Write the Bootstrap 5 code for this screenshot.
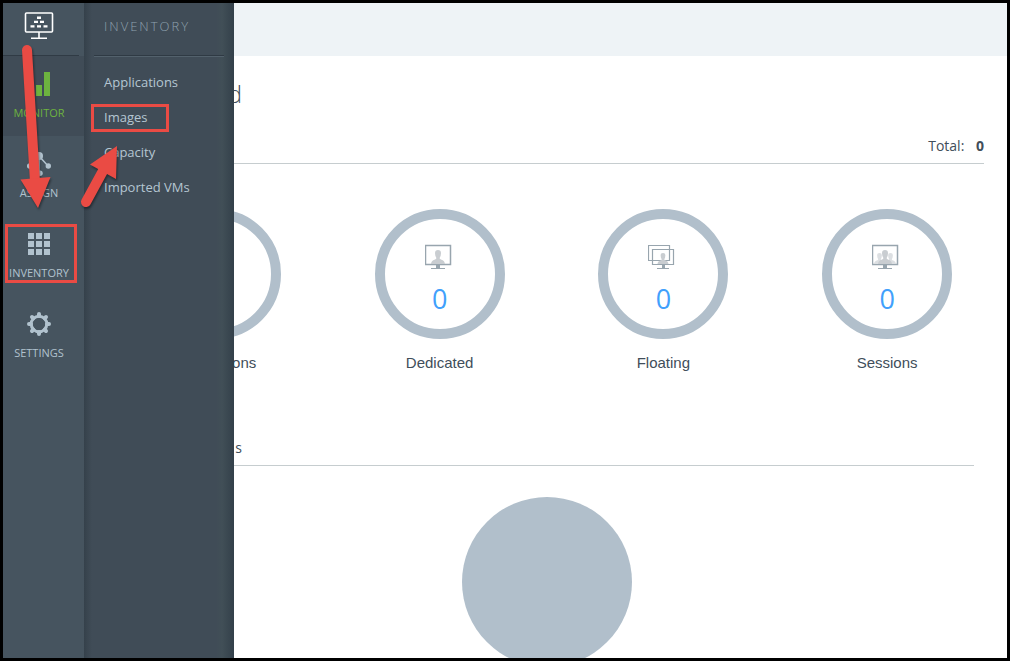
<!DOCTYPE html>
<html lang="en">
<head>
<meta charset="utf-8">
<meta name="viewport" content="width=device-width, initial-scale=1">
<title>Dashboard</title>
<link href="https://cdn.jsdelivr.net/npm/bootstrap@5.3.0/dist/css/bootstrap.min.css" rel="stylesheet">
<style>
  body { font-family: "Open Sans", sans-serif; font-size: 14px; color: #414e5a; }
  .app-frame { border: 3px solid #000; }
  .rail { width: 81px; background: #46545f; color: #b1c2ce; }
  .rail-logo { height: 53px; padding-right: 9px; }
  .rail-logo::after { content: ""; height: 1px; background: #303b45; position: absolute; left: 0; right: 5px; bottom: 0; }
  .rail-item { height: 80px; padding: 16px 9px 0 0; gap: 9px; font-size: 11px; line-height: 16px; color: inherit; text-decoration: none; white-space: nowrap; }
  .rail-item.active { background: #404c57; color: #6db33f; }
  .flyout { left: 81px; top: 0; bottom: 0; width: 150px; background: linear-gradient(90deg, #35414b, #404c57 8px, #404c57 132px, #414f57 138px, #33404a); }
  .flyout-title { height: 53px; margin: 0 10px; padding: 13px 0 0 10px; font-size: 13px; font-weight: 300; line-height: 20px; letter-spacing: 2px; color: #8fa1ae; border-bottom: 1px solid #2f3a44; box-shadow: 0 1px #53616c; }
  .flyout-links { padding: 16px 0 0 20px; gap: 15px; }
  .flyout-links a { font-size: 13px; line-height: 20px; color: #b5c6d2; text-decoration: none; }
  .topbar { height: 53px; background: #eef3f6; }
  .page-pad { padding-left: 36px; padding-right: 23px; }
  .page-title { font-size: 24px; line-height: 32px; font-weight: 300; margin: 22px 0 0; }
  .total-line { margin-top: 26px; padding-bottom: 7px; line-height: 20px; border-bottom: 1px solid #c6cdcf; }
  .rings { padding: 45px 8px 0 20px; }
  .ring { width: 130px; height: 130px; border: 10px solid #b1bfcb; border-radius: 50%; padding-top: 24px; }
  .ring-count { font-size: 27px; line-height: 40px; color: #41a0fc; margin-top: 8px; }
  .ring-label { font: 15px/20px "Liberation Sans", Arial, sans-serif; margin-top: 14px; }
  .section-head { margin: 65px 33px 0 36px; padding-bottom: 7px; line-height: 20px; border-bottom: 1px solid #c6cdcf; }
  .heading-text { width: 122px; }
  .pie { width: 170px; height: 170px; border-radius: 50%; background: #b1bfcb; margin: 31px 33px 0 36px; }
</style>
</head>
<body>
<svg class="d-none" aria-hidden="true">
  <symbol id="person" viewBox="0 0 14 14"><path d="M7 0C9 0 10 1 10 3.3L9.6 6 8.8 7.5V9C11 10 13.5 10.2 14 14H0C.5 10.2 3 10 5.2 9V7.5L4.4 6 4 3.3C4 1 5 0 7 0Z"/></symbol>
</svg>
<div class="app-frame position-relative vh-100 overflow-hidden d-flex">
  <nav class="rail flex-shrink-0 d-flex flex-column" aria-label="Main">
    <div class="rail-logo position-relative text-center text-white">
      <svg class="mt-2" width="30" height="30" viewBox="0 0 30 30" fill="currentColor" aria-hidden="true">
        <rect x="1.500" y="2" width="27" height="19" rx="1" fill="none" stroke="currentColor" stroke-width="1.6"/>
        <path d="M14.200 21h1.600v6h-1.600zM7 26.500h16V28H7zM13 5.500h4v2.400h-4zM10 9.800h4v2.300h-4zM16 9.800h4v2.300h-4zM6.500 14.200h4v2.400h-4zM13 14.200h4v2.400h-4zM19.500 14.200h4v2.400h-4z"/>
      </svg>
    </div>
    <a href="#" class="rail-item active d-flex flex-column align-items-center">
      <svg width="24" height="24" fill="currentColor" aria-hidden="true"><path d="M1 18h6v6H1zM9 13h6v11H9zM17 0h6v24h-6z"/></svg>
      <span>MONITOR</span>
    </a>
    <a href="#" class="rail-item d-flex flex-column align-items-center">
      <svg width="24" height="24" fill="currentColor" aria-hidden="true"><path d="M12 4 2 15M12 4l10 11M12 4v18" stroke="currentColor" stroke-width="1.5"/><circle cx="12" cy="4" r="4"/><circle cx="2.7" cy="14" r="2.7"/><circle cx="21.3" cy="14" r="2.7"/><circle cx="13" cy="21.3" r="2.7"/></svg>
      <span>ASSIGN</span>
    </a>
    <a href="#" class="rail-item d-flex flex-column align-items-center">
      <svg width="24" height="24" fill="currentColor" aria-hidden="true"><path d="M1 1h6v6H1zM9 1h6v6H9zM17 1h6v6h-6zM1 9h6v6H1zM9 9h6v6H9zM17 9h6v6h-6zM1 17h6v6H1zM9 17h6v6H9zM17 17h6v6h-6z"/></svg>
      <span>INVENTORY</span>
    </a>
    <a href="#" class="rail-item d-flex flex-column align-items-center">
      <svg width="24" height="24" viewBox="0 0 24 24" fill="none" stroke="currentColor" aria-hidden="true"><circle cx="12" cy="12" r="7.8" stroke-width="3"/><path d="M12 4V2M12 22v-2M4 12H2M22 12h-2M6.3 6.3 5 5M17.7 6.3 19 5M6.3 17.7 5 19M17.7 17.7 19 19" stroke-width="4" stroke-linecap="round"/></svg>
      <span>SETTINGS</span>
    </a>
  </nav>

  <main class="flex-grow-1 overflow-hidden">
    <div class="topbar"></div>
    <header class="page-pad">
      <h1 class="page-title heading-text text-end">d</h1>
      <div class="total-line text-end">Total: <strong class="ms-1 ps-1">0</strong></div>
    </header>
    <section class="rings d-flex text-center">
      <div class="col-3 d-flex flex-column align-items-center">
        <div class="ring"></div>
        <div class="ring-label">Applications</div>
      </div>
      <div class="col-3 d-flex flex-column align-items-center">
        <div class="ring">
          <svg class="d-block mx-auto" width="30" height="28" aria-hidden="true"><path d="M.500 2.500h25v19H.500z" fill="#fff" stroke="#98a5ae" stroke-width="1.500"/><use href="#person" x="6" y="7" width="14" height="14" fill="#c9cdd1"/><path d="M11 22h4v3h5v1H6v-1h5z" fill="#98a5ae"/></svg>
          <div class="ring-count">0</div>
        </div>
        <div class="ring-label">Dedicated</div>
      </div>
      <div class="col-3 d-flex flex-column align-items-center">
        <div class="ring">
          <svg class="d-block mx-auto" width="30" height="28" aria-hidden="true"><path d="M.5 2.5h21v15H.5zM4.500 6.500h21v15h-21z" fill="#fff" stroke="#98a5ae" stroke-width="1.200"/><use href="#person" x="9" y="10" width="12" height="11" fill="#c9cdd1"/><path d="M14 22h3v3h4v1H9v-1h5z" fill="#98a5ae"/></svg>
          <div class="ring-count">0</div>
        </div>
        <div class="ring-label">Floating</div>
      </div>
      <div class="col-3 d-flex flex-column align-items-center">
        <div class="ring">
          <svg class="d-block mx-auto" width="30" height="28" aria-hidden="true"><path d="M.5 2.500h25v19H.5z" fill="#fff" stroke="#98a5ae" stroke-width="1.500"/><g fill="#dcdfe2"><use href="#person" x="2" y="10" width="11" height="11"/><use href="#person" x="13" y="10" width="11" height="11"/></g><use href="#person" x="6" y="7" width="14" height="14" fill="#c9cdd1"/><path d="M11 22h4v3h5v1H6v-1h5z" fill="#98a5ae"/></svg>
          <div class="ring-count">0</div>
        </div>
        <div class="ring-label">Sessions</div>
      </div>
    </section>
    <section>
      <div class="section-head"><div class="heading-text text-end">s</div></div>
      <div class="d-flex justify-content-center"><div class="pie"></div></div>
    </section>
  </main>

  <aside class="flyout position-absolute">
    <div class="flyout-title">INVENTORY</div>
    <nav class="flyout-links d-flex flex-column align-items-start" aria-label="Inventory">
      <a href="#">Applications</a>
      <a href="#">Images</a>
      <a href="#">Capacity</a>
      <a href="#">Imported VMs</a>
    </nav>
  </aside>

  <!-- Callout boxes and arrows laid over the menus -->
  <svg class="position-absolute top-0 start-0 pe-none" width="180" height="300" viewBox="3 3 180 300" aria-hidden="true">
    <g fill="none" stroke="#ea4b44" stroke-width="3"><path d="M6.500 225.500h69v56h-69zM92.500 105.500h75v25h-75z"/></g>
    <g style="filter:drop-shadow(1px 2px 1px #0006)" fill="#ea4b44" stroke="#ea4b44">
      <path d="M27 50l8 132M86 202l18-33" stroke-width="10" stroke-linecap="round"/>
      <path d="M20.500 179.500 50.500 177 38 208zM90 164.500 117 146 116 179z" stroke="none"/>
    </g>
  </svg>
</div>
<script src="https://cdn.jsdelivr.net/npm/bootstrap@5.3.0/dist/js/bootstrap.bundle.min.js"></script>
</body>
</html>
